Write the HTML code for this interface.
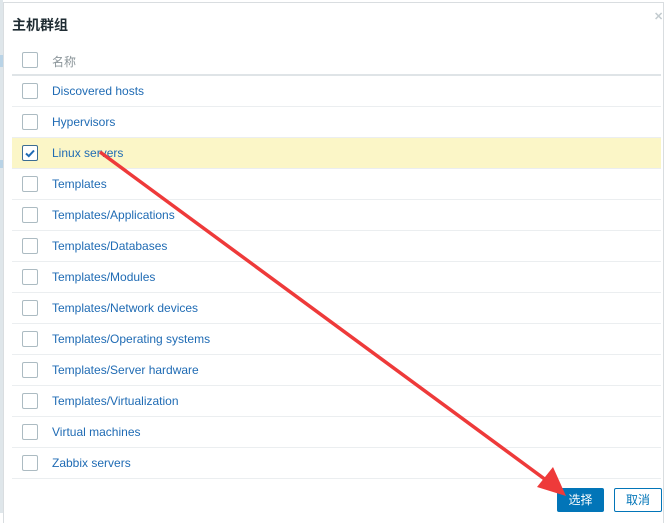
<!DOCTYPE html>
<html><head><meta charset="utf-8"><style>
body{margin:0;width:664px;height:513px;overflow:hidden;background:#fff;font-family:"Liberation Sans","Noto Sans CJK SC",sans-serif;position:relative}
.lb{position:absolute;left:0;top:0;width:3px;height:513px;background:#dfe6ea}
.dlg{position:absolute;left:3px;top:2px;width:659px;height:520px;border:1px solid #d9dde0;border-bottom:none;background:#fff}
.t{position:absolute;left:12px;top:15px;font-size:14px;color:#1f2c33;font-weight:bold}
.x{position:absolute;left:654px;top:10px;color:#c3cbcf;font-size:11px;font-weight:bold}
.row{position:absolute;left:12px;width:649px;height:30px;border-bottom:1px solid #ebeef0;font-size:12px;color:#1f6bb4}
.row span{position:absolute;left:40px;top:8px}
.cb{position:absolute;left:10px;top:7px;width:14px;height:14px;border:1px solid #acbbc2;border-radius:2px;background:#fff}
.hd{top:45px;height:29px;border-bottom:2px solid #dfe4e7;color:#8a9499}
.sel{background:#fbf6c7}
.b1{position:absolute;left:557px;top:488px;width:47px;height:24px;background:#0275b8;color:#fff;font-size:12px;text-align:center;line-height:24px;border-radius:2px}
.b2{position:absolute;left:614px;top:488px;width:46px;height:22px;border:1px solid #0275b8;color:#0275b8;font-size:12px;text-align:center;line-height:22px;border-radius:2px}
</style></head><body>
<div class="lb"></div>
<div style="position:absolute;left:0;top:55px;width:3px;height:12px;background:#b9d3e6"></div>
<div style="position:absolute;left:0;top:160px;width:3px;height:8px;background:#b9d3e6"></div>
<div class="dlg"></div>
<div class="t">主机群组</div>
<div class="x">✕</div>
<div class="row hd"><div class="cb"></div><span style="top:8px">名称</span></div>
<div class="row" style="top:76px"><div class="cb"></div><span>Discovered hosts</span></div>
<div class="row" style="top:107px"><div class="cb"></div><span>Hypervisors</span></div>
<div class="row sel" style="top:138px"><div class="cb" style="border-color:#3b6d93"><svg width="14" height="14" viewBox="0 0 14 14" style="position:absolute;left:0;top:0"><path d="M3 7.5l2.8 2.6L11 4.5" fill="none" stroke="#1f6bb4" stroke-width="2"/></svg></div><span>Linux servers</span></div>
<div class="row" style="top:169px"><div class="cb"></div><span>Templates</span></div>
<div class="row" style="top:200px"><div class="cb"></div><span>Templates/Applications</span></div>
<div class="row" style="top:231px"><div class="cb"></div><span>Templates/Databases</span></div>
<div class="row" style="top:262px"><div class="cb"></div><span>Templates/Modules</span></div>
<div class="row" style="top:293px"><div class="cb"></div><span>Templates/Network devices</span></div>
<div class="row" style="top:324px"><div class="cb"></div><span>Templates/Operating systems</span></div>
<div class="row" style="top:355px"><div class="cb"></div><span>Templates/Server hardware</span></div>
<div class="row" style="top:386px"><div class="cb"></div><span>Templates/Virtualization</span></div>
<div class="row" style="top:417px"><div class="cb"></div><span>Virtual machines</span></div>
<div class="row" style="top:448px"><div class="cb"></div><span>Zabbix servers</span></div>
<div class="b1">选择</div>
<div class="b2">取消</div>
<svg width="664" height="513" style="position:absolute;left:0;top:0">
<line x1="100" y1="152" x2="550" y2="483" stroke="#ee3a3a" stroke-width="3.5"/>
<path d="M566 496 L537 487 L553 467 Z" fill="#ee3a3a"/>
</svg>
</body></html>
